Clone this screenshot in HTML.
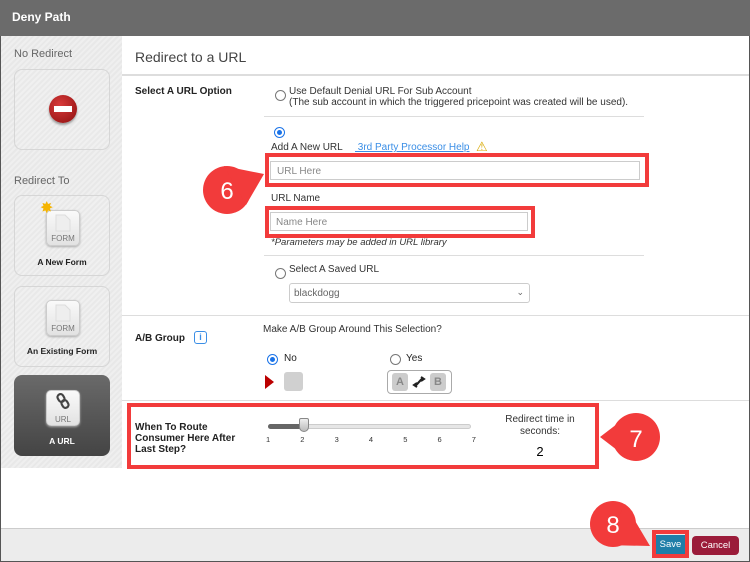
<!DOCTYPE html>
<html><head><meta charset="utf-8"><style>
*{margin:0;padding:0;box-sizing:border-box}
body{width:750px;height:562px;overflow:hidden;font-family:"Liberation Sans",sans-serif;background:#fff;position:relative}
.a{position:absolute}
.t{font-size:11px;color:#222}
.b{font-weight:bold}
.radio{position:absolute;width:11px;height:11px;border:1px solid #777;border-radius:50%;background:#fff}
.radio.on{border-color:#1a73e8}
.radio.on::after{content:"";position:absolute;left:2px;top:2px;width:5px;height:5px;border-radius:50%;background:#1a73e8}
.card{position:absolute;left:14px;width:96px;border:1px solid #d6d6d6;border-radius:8px;background:repeating-linear-gradient(135deg,#f0f0f0 0 2px,#e9e9e9 2px 4px)}
.doc{position:absolute;left:46px;width:34px;height:36px;border-radius:5px;background:linear-gradient(#fafafa,#e2e2e2);border:1px solid #ccc;box-shadow:0 1px 2px #aaa;font-size:8px;color:#777;text-align:center;padding-top:23px}
.red{position:absolute;border:4px solid #f23b3b}
</style></head><body>
<div class="a" style="left:0;top:0;width:750px;height:562px;border:1px solid #555"></div>
<div class="a" style="left:0;top:0;width:750px;height:36px;background:#6b6b6b"></div>
<div class="a b" style="left:12px;top:10px;color:#fff;font-size:12px">Deny Path</div>
<!-- sidebar -->
<div class="a" style="left:1px;top:36px;width:121px;height:432px;background:repeating-linear-gradient(135deg,#efefef 0 2px,#e8e8e8 2px 4px)"></div>
<div class="a" style="left:14px;top:48px;font-size:11px;color:#666">No Redirect</div>
<div class="card" style="top:69px;height:81px"></div>
<div class="a" style="left:49px;top:95px;width:28px;height:28px;border-radius:50%;background:radial-gradient(circle at 40% 35%,#d83a3a,#8c0e0e);box-shadow:0 2px 2px #999"></div>
<div class="a" style="left:54px;top:106px;width:18px;height:6px;background:#fff"></div>
<div class="a" style="left:14px;top:175px;font-size:11px;color:#666">Redirect To</div>
<div class="card" style="top:195px;height:81px"></div>
<div class="doc" style="top:210px">FORM</div>
<svg class="a" style="left:55px;top:214px" width="16" height="18"><path d="M1 1H10L15 6V17H1Z" fill="#eee" stroke="#ddd"/></svg>
<div class="a" style="left:40px;top:201px;color:#f5b400;font-size:16px;line-height:16px">✸</div>
<div class="a b" style="left:14px;top:257px;width:96px;text-align:center;font-size:8.5px;color:#222">A New Form</div>
<div class="card" style="top:286px;height:81px"></div>
<div class="doc" style="top:300px">FORM</div>
<svg class="a" style="left:55px;top:304px" width="16" height="18"><path d="M1 1H10L15 6V17H1Z" fill="#eee" stroke="#ddd"/></svg>
<div class="a b" style="left:14px;top:346px;width:96px;text-align:center;font-size:8.5px;color:#222">An Existing Form</div>
<div class="a" style="left:14px;top:375px;width:96px;height:81px;border-radius:8px;background:linear-gradient(#6a6a6a,#444)"></div>
<div class="doc" style="top:390px;padding-top:24px">URL</div>
<svg class="a" style="left:56px;top:393px" width="14" height="16"><g fill="none" stroke="#444" stroke-width="2.2"><rect x="2" y="1" width="6" height="8" rx="3" transform="rotate(-30 5 5)"/><rect x="6" y="7" width="6" height="8" rx="3" transform="rotate(-30 9 11)"/></g></svg>
<div class="a b" style="left:14px;top:436px;width:96px;text-align:center;font-size:8.5px;color:#fff">A URL</div>
<!-- main -->
<div class="a" style="left:122px;top:36px;width:627px;height:40px;border-bottom:2px solid #ddd"></div>
<div class="a" style="left:135px;top:49px;font-size:14px;color:#444">Redirect to a URL</div>
<div class="a t b" style="left:135px;top:86px;font-size:10px">Select A URL Option</div>
<div class="radio" style="left:275px;top:90px"></div>
<div class="a t" style="left:289px;top:86px;font-size:10px;line-height:11px;color:#333">Use Default Denial URL For Sub Account<br>(The sub account in which the triggered pricepoint was created will be used).</div>
<div class="a" style="left:264px;top:116px;width:380px;height:1px;background:#ddd"></div>
<div class="radio on" style="left:274px;top:127px"></div>
<div class="a t" style="left:271px;top:142px;font-size:10px;color:#333">Add A New URL</div>
<div class="a" style="left:355px;top:142px;font-size:10px;color:#3a8ee6;text-decoration:underline">&nbsp;3rd Party Processor Help</div>
<div class="a" style="left:476px;top:139px;color:#d8a800;font-size:13px">⚠</div>
<div class="a" style="left:270px;top:161px;width:370px;height:19px;border:1px solid #ccc;font-size:10px;color:#888;padding:4px 6px">URL Here</div>
<div class="a t" style="left:271px;top:193px;font-size:10px;color:#333">URL Name</div>
<div class="a" style="left:270px;top:212px;width:258px;height:19px;border:1px solid #ccc;font-size:10px;color:#888;padding:4px 5px">Name Here</div>
<div class="a" style="left:271px;top:237px;font-size:9.5px;font-style:italic;color:#333">*Parameters may be added in URL library</div>
<div class="a" style="left:264px;top:255px;width:380px;height:1px;background:#ddd"></div>
<div class="radio" style="left:275px;top:268px"></div>
<div class="a t" style="left:289px;top:264px;font-size:10px;color:#333">Select A Saved URL</div>
<div class="a" style="left:289px;top:283px;width:241px;height:20px;border:1px solid #ccc;border-radius:3px;font-size:10px;color:#666;padding:4px 4px">blackdogg<span style="position:absolute;right:5px;top:3px;font-size:9px">⌄</span></div>
<div class="a" style="left:122px;top:315px;width:627px;height:1px;background:#ddd"></div>
<div class="a t b" style="left:135px;top:333px;font-size:10px">A/B Group</div>
<div class="a" style="left:194px;top:331px;width:13px;height:13px;border:1.5px solid #3a8ee6;border-radius:3px;color:#3a8ee6;font-size:9px;font-weight:bold;text-align:center;line-height:10px">i</div>
<div class="a t" style="left:263px;top:324px;font-size:10px;color:#333">Make A/B Group Around This Selection?</div>
<div class="radio on" style="left:267px;top:354px"></div>
<div class="a t" style="left:284px;top:353px;font-size:10px">No</div>
<div class="radio" style="left:390px;top:354px"></div>
<div class="a t" style="left:406px;top:353px;font-size:10px">Yes</div>
<div class="a" style="left:265px;top:375px;width:0;height:0;border-left:9px solid #b00;border-top:7px solid transparent;border-bottom:7px solid transparent"></div>
<div class="a" style="left:284px;top:372px;width:19px;height:19px;background:#d0d0d0;border-radius:3px"></div>
<div class="a" style="left:387px;top:370px;width:65px;height:24px;border:1px solid #aaa;border-radius:4px"></div>
<div class="a" style="left:392px;top:373px;width:16px;height:18px;background:#ccc;border-radius:3px;color:#888;font-size:11px;font-weight:bold;text-align:center;line-height:18px">A</div>
<div class="a" style="left:430px;top:373px;width:16px;height:18px;background:#ccc;border-radius:3px;color:#888;font-size:11px;font-weight:bold;text-align:center;line-height:18px">B</div>
<svg class="a" style="left:411px;top:374px" width="16" height="16"><path d="M3 11 C6 13 8 6 12 5 M10 3 L13 5 L10 7 M13 5 C10 3 8 10 4 11 M6 13 L3 11 L6 9" fill="none" stroke="#222" stroke-width="2"/></svg>
<div class="a" style="left:122px;top:400px;width:627px;height:1px;background:#ddd"></div>
<div class="a t b" style="left:135px;top:422px;font-size:10px;line-height:11px">When To Route<br>Consumer Here After<br>Last Step?</div>
<div class="a" style="left:268px;top:424px;width:203px;height:5px;border-radius:3px;background:#e6e6e6;border:1px solid #ccc"></div>
<div class="a" style="left:268px;top:424px;width:36px;height:5px;border-radius:3px;background:#666"></div>
<div class="a" style="left:299px;top:418px;width:10px;height:14px;border-radius:2px 2px 5px 5px;background:linear-gradient(#eee,#bbb);border:1px solid #888"></div>
<div class="a" style="left:266px;top:435px;width:210px;font-size:7.5px;color:#333;display:flex;justify-content:space-between"><span>1</span><span>2</span><span>3</span><span>4</span><span>5</span><span>6</span><span>7</span></div>
<div class="a t" style="left:490px;top:414px;width:100px;text-align:center;font-size:10px;color:#333;line-height:12px">Redirect time in<br>seconds:</div>
<div class="a" style="left:490px;top:444px;width:100px;text-align:center;font-size:13px;color:#000">2</div>
<!-- footer -->
<div class="a" style="left:1px;top:528px;width:748px;height:33px;background:#ececec;border-top:1px solid #ccc"></div>
<div class="a" style="left:656px;top:535px;width:29px;height:19px;background:#1f7ea8;color:#fff;font-size:9.5px;text-align:center;line-height:19px">Save</div>
<div class="a" style="left:692px;top:536px;width:47px;height:19px;background:#9b1c3a;border-radius:4px;color:#fff;font-size:9.5px;text-align:center;line-height:19px">Cancel</div>
<!-- annotations -->
<div class="red" style="left:265px;top:153px;width:384px;height:34px"></div>
<div class="red" style="left:265px;top:206px;width:270px;height:32px"></div>
<div class="red" style="left:127px;top:403px;width:472px;height:66px"></div>
<div class="red" style="left:652px;top:530px;width:37px;height:28px"></div>
<svg class="a" style="left:0;top:0" width="750" height="562">
<circle cx="227" cy="190" r="24" fill="#f23b3b"/>
<path d="M264 174 L224 166 L246 205 Z" fill="#f23b3b"/>
<text x="227" y="199" font-family="Liberation Sans" font-size="24" fill="#fff" text-anchor="middle">6</text>
<circle cx="636" cy="437" r="24" fill="#f23b3b"/>
<path d="M600 437 L630 414 L630 460 Z" fill="#f23b3b"/>
<text x="636" y="447" font-family="Liberation Sans" font-size="24" fill="#fff" text-anchor="middle">7</text>
<circle cx="613" cy="524" r="23" fill="#f23b3b"/>
<path d="M650 546 L625 504 L605 545 Z" fill="#f23b3b"/>
<text x="613" y="533" font-family="Liberation Sans" font-size="24" fill="#fff" text-anchor="middle">8</text>
</svg>
</body></html>
